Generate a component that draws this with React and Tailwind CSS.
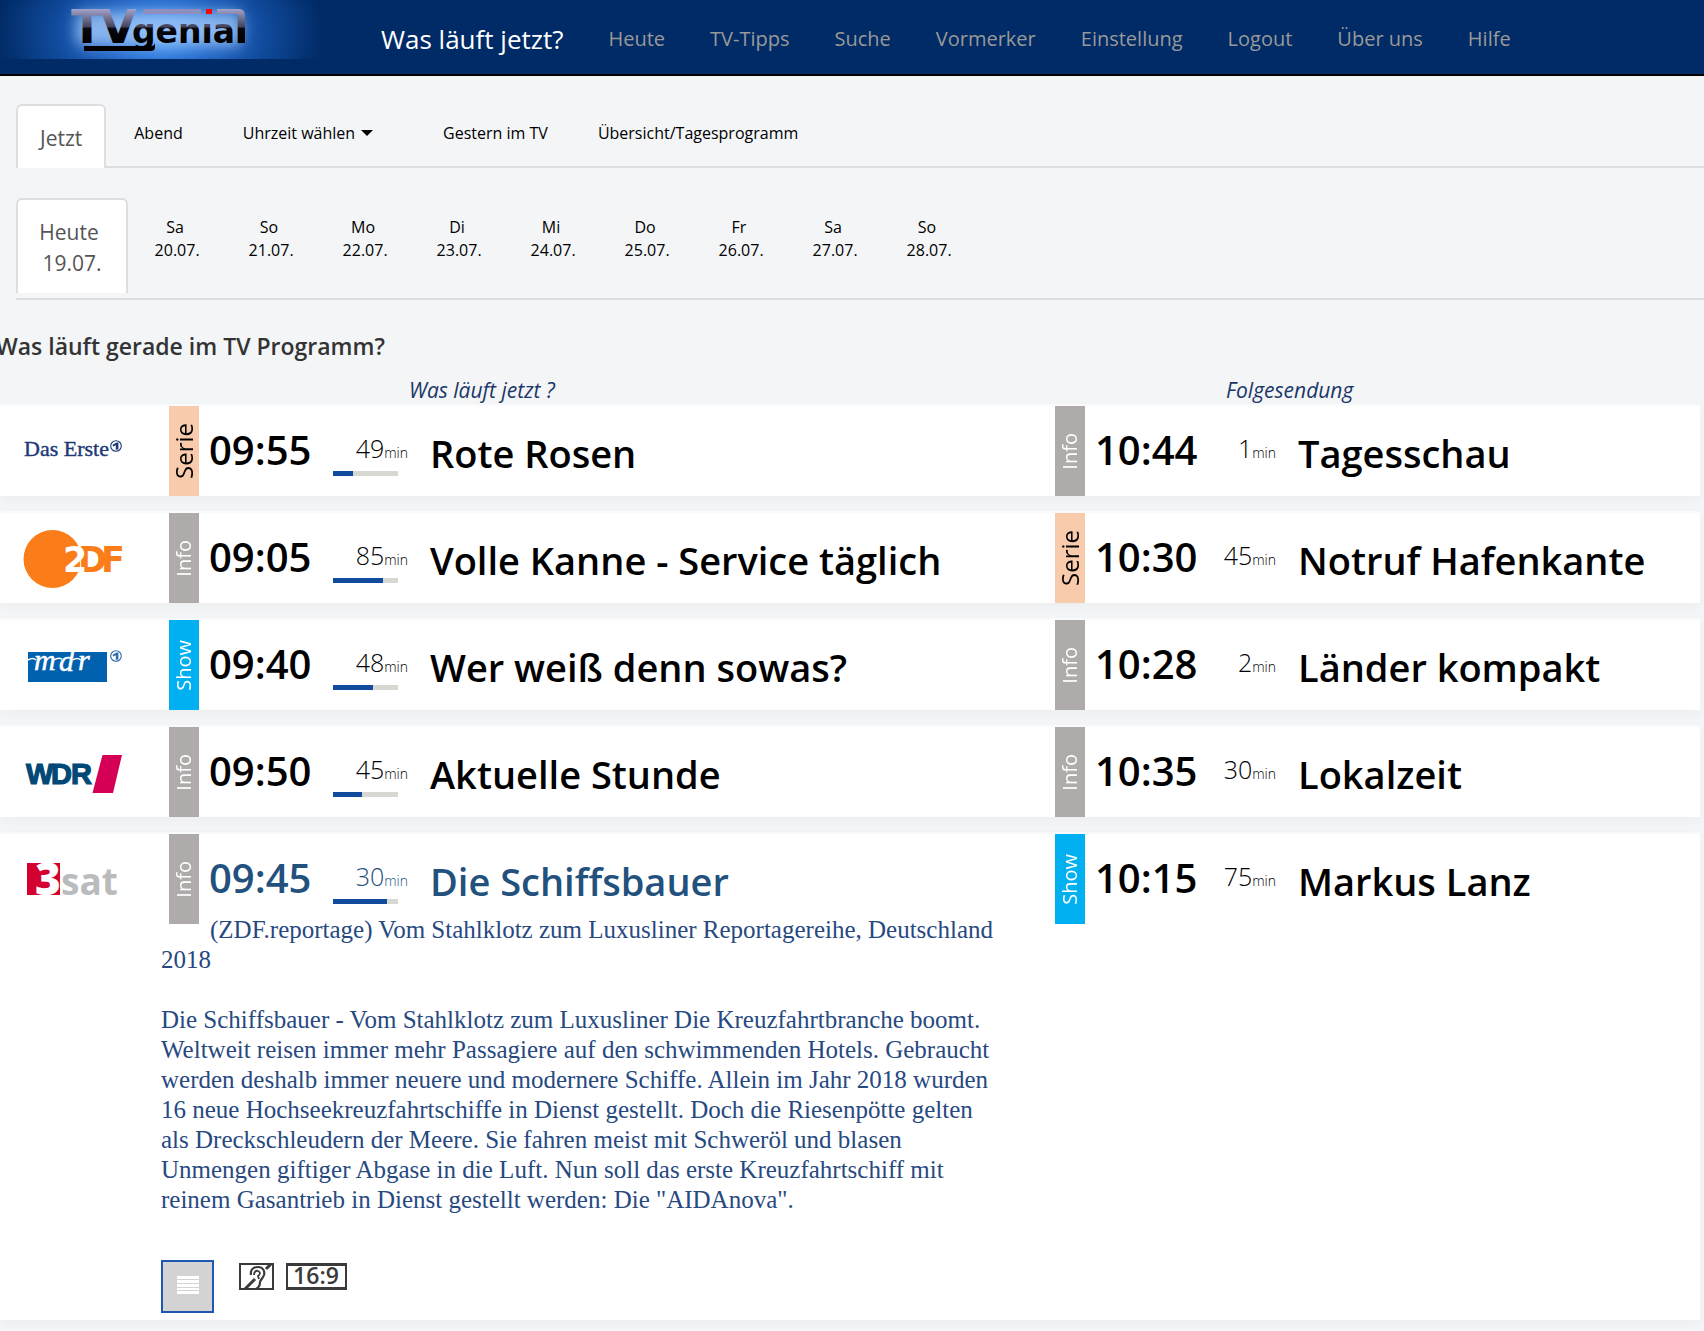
import React from 'react';

const NAV = ['Heute', 'TV-Tipps', 'Suche', 'Vormerker', 'Einstellung', 'Logout', 'Über uns', 'Hilfe'];

const DAYS = [
    ['Sa', '20.07.'],
    ['So', '21.07.'],
    ['Mo', '22.07.'],
    ['Di', '23.07.'],
    ['Mi', '24.07.'],
    ['Do', '25.07.'],
    ['Fr', '26.07.'],
    ['Sa', '27.07.'],
    ['So', '28.07.'],
];

const GENRES = {
    Serie: 'bg-[#f8cbad] text-black text-2xl',
    Info: 'bg-[#afabaa] text-white text-xl',
    Show: 'bg-[#00b0f0] text-white text-xl',
};

function SiteLogo() {
    return (
        <svg className="h-[59px] w-[323px] shrink-0" viewBox="0 0 323 59" role="img" aria-label="TVgenial">
            <defs>
                <radialGradient id="glow" gradientUnits="userSpaceOnUse" cx="0" cy="0" r="1" gradientTransform="translate(160 34) scale(163 105)">
                    <stop offset="0" stopColor="#4a9bf5" />
                    <stop offset="0.35" stopColor="#2569c8" />
                    <stop offset="0.65" stopColor="#104a9c" />
                    <stop offset="1" stopColor="#002b66" />
                </radialGradient>
                <linearGradient id="chrome" gradientUnits="userSpaceOnUse" x1="0" y1="9" x2="0" y2="44">
                    <stop offset="0" stopColor="#a3a3cc" />
                    <stop offset="0.5" stopColor="#45455f" />
                    <stop offset="0.56" stopColor="#08080d" />
                    <stop offset="1" stopColor="#000" />
                </linearGradient>
                <filter id="halo" x="-20%" y="-50%" width="140%" height="200%">
                    <feGaussianBlur stdDeviation="7" />
                </filter>
            </defs>
            <rect width="323" height="59" fill="url(#glow)" />
            <rect x="76" y="12" width="166" height="34" rx="8" fill="#a9cdfb" opacity="0.75" filter="url(#halo)" />
            <g fill="url(#chrome)" fontFamily="DejaVu Sans" fontWeight="700">
                <text x="71" y="43" fontSize="47">T</text>
                <text x="100" y="43" fontSize="47">V</text>
                <text x="132" y="43" fontSize="33">genıal</text>
            </g>
            <path d="M144 9h57v5h-59z" fill="#8f8fbf" />
            <path d="M217 9h22q6 0 6 7v27h-6V18q0-4-4-4h-18z" fill="url(#chrome)" />
            <rect x="206" y="9" width="6" height="5" fill="#f00" />
            <path d="M84 46h67q4 0 4-4v5q0 4-4 4H84z" />
        </svg>
    );
}

function ArdMark({ x, y, color }) {
    return (
        <g transform={`translate(${x} ${y})`}>
            <circle r="5.3" fill="none" stroke={color} strokeWidth="1.1" />
            <path d="M-3.4-1.2 0.6-3.6H2.4V3.2L-0.2 4V-0.8L-3 0.6z" fill={color} />
        </g>
    );
}

const LOGOS = {
    'Das Erste': (
        <>
            <text x="24" y="50" fontFamily="Liberation Serif" fontSize="22" fill="#1d3a78" stroke="#1d3a78" strokeWidth="0.4">Das Erste</text>
            <ArdMark x={116} y={40} color="#1d3a78" />
        </>
    ),
    ZDF: (
        <g fontFamily="DejaVu Sans" fontWeight="700" fontSize="35">
            <circle cx="52.500" cy="46" r="29" fill="#fa7d19" />
            <text x="78" y="59" fill="#fa7d19" stroke="#fff" strokeWidth="2" paintOrder="stroke">D</text>
            <text x="101" y="59" fill="#fa7d19">F</text>
            <text x="63" y="59" fill="#fff">2</text>
        </g>
    ),
    MDR: (
        <>
            <rect x="28" y="32" width="79" height="30" fill="#0061af" />
            <g fill="#fff" stroke="#fff" strokeWidth="0.500" fontFamily="Liberation Serif" fontStyle="italic" fontSize="30">
                <text x="34" y="50">m</text>
                <text x="59" y="51">d</text>
                <text x="78" y="50">r</text>
            </g>
            <path d="M28 40q5-3 8 0M54 40q4-3 8-1M73 40q4-3 8 0" fill="none" stroke="#fff" strokeWidth="1.500" />
            <ArdMark x={116} y={36} color="#2c6ca8" />
        </>
    ),
    WDR: (
        <>
            <g fill="#004876" stroke="#004876" strokeWidth="1.200" fontFamily="Liberation Sans" fontWeight="700" fontSize="29">
                <text x="26" y="57">W</text>
                <text x="51" y="57">D</text>
                <text x="71" y="57">R</text>
            </g>
            <path d="M102.500 28H122l-9 38H92.500z" fill="#d50055" />
        </>
    ),
    '3sat': (
        <g fontFamily="Open Sans" fontWeight="800">
            <rect x="27" y="29" width="33" height="32" fill="#d4002f" />
            <text x="35" y="61" fontSize="44" fill="#fff">3</text>
            <text x="61" y="61" fontSize="37" fontWeight="700" fill="#babbbc">sat</text>
        </g>
    ),
};

const PROGRAMS = [
    {
        channel: 'Das Erste',
        now: { genre: 'Serie', time: '09:55', minutes: 49, progress: 20, title: 'Rote Rosen' },
        next: { genre: 'Info', time: '10:44', minutes: 1, title: 'Tagesschau' },
    },
    {
        channel: 'ZDF',
        now: { genre: 'Info', time: '09:05', minutes: 85, progress: 50, title: 'Volle Kanne - Service täglich' },
        next: { genre: 'Serie', time: '10:30', minutes: 45, title: 'Notruf Hafenkante' },
    },
    {
        channel: 'MDR',
        now: { genre: 'Show', time: '09:40', minutes: 48, progress: 40, title: 'Wer weiß denn sowas?' },
        next: { genre: 'Info', time: '10:28', minutes: 2, title: 'Länder kompakt' },
    },
    {
        channel: 'WDR',
        now: { genre: 'Info', time: '09:50', minutes: 45, progress: 29, title: 'Aktuelle Stunde' },
        next: { genre: 'Info', time: '10:35', minutes: 30, title: 'Lokalzeit' },
    },
    {
        channel: '3sat',
        now: { genre: 'Info', time: '09:45', minutes: 30, progress: 54, title: 'Die Schiffsbauer' },
        next: { genre: 'Show', time: '10:15', minutes: 75, title: 'Markus Lanz' },
        subtitle: '(ZDF.reportage) Vom Stahlklotz zum Luxusliner Reportagereihe, Deutschland 2018',
        text: 'Die Schiffsbauer - Vom Stahlklotz zum Luxusliner Die Kreuzfahrtbranche boomt. Weltweit reisen immer mehr Passagiere auf den schwimmenden Hotels. Gebraucht werden deshalb immer neuere und modernere Schiffe. Allein im Jahr 2018 wurden 16 neue Hochseekreuzfahrtschiffe in Dienst gestellt. Doch die Riesenpötte gelten als Dreckschleudern der Meere. Sie fahren meist mit Schweröl und blasen Unmengen giftiger Abgase in die Luft. Nun soll das erste Kreuzfahrtschiff mit reinem Gasantrieb in Dienst gestellt werden: Die "AIDAnova".',
    },
];

function Entry({ genre, time, minutes, progress, title, open }) {
    const hasBar = progress !== undefined;

    return (
        <div className={`ml-2 flex h-[81px] items-start whitespace-nowrap ${open ? 'text-[#23517e]' : 'text-black'}`}>
            <div className={`flex h-[90px] w-[30px] shrink-0 items-center justify-center ${GENRES[genre]}`}>
                <span className="rotate-180 leading-[30px] [writing-mode:vertical-rl]">{genre}</span>
            </div>
            <time className="w-[134px] shrink-0 pl-2.5 text-[40px] leading-[88px] font-semibold">{time}</time>
            <div className={`shrink-0 pt-[22px] ${hasBar ? 'w-[75px]' : 'w-[57px]'}`}>
                <p className="text-right text-[25px] leading-10 font-light">
                    {minutes}<span className="text-sm">min</span>
                </p>
                {hasBar && (
                    <div className="mt-[3px] h-[5px] w-[65px] bg-[#d8d8d3]">
                        <div className="h-full bg-[#104b9e]" style={{ width: `${progress}px` }} />
                    </div>
                )}
            </div>
            <h3 className="ml-[22px] text-[38px] leading-[94px] font-semibold">{title}</h3>
        </div>
    );
}

function Details({ subtitle, text }) {
    return (
        <div className="pb-[7px] font-['Liberation_Serif',serif] text-[25px] leading-[30px] text-[#27497f]">
            <p className="max-w-[841px] indent-[49px]">{subtitle}</p>
            <p className="mt-[30px] max-w-[841px]">{text}</p>
            <div className="mt-[45px] flex items-start">
                <button type="button" aria-label="Details" className="flex h-[53px] w-[53px] items-center justify-center border-2 border-[#1e56b4] bg-[#d3d3d3]">
                    <svg className="mb-1 h-[18px] w-[22px]" viewBox="0 0 22 18" fill="#fff">
                        <path d="M0 0h22v3H0zM0 4h22v3H0zM0 8h22v3H0zM0 12h22v2H0zM0 15h22v3H0z" />
                    </svg>
                </button>
                <svg className="mt-[3px] ml-[25px] h-[27px] w-[35px]" viewBox="0 0 35 27" fill="none" stroke="#3a3a3a" role="img" aria-label="Untertitel für Gehörlose">
                    <rect x="1" y="1" width="33" height="25" strokeWidth="2" />
                    <path d="M6 26 16 16M27 6l5-5" strokeWidth="3" />
                    <path d="M12 12C11 6 15 4 19 4c5 0 7 4 6 8-1 3-3 4-4 7 0 3-2 6-4 7" strokeWidth="2.200" />
                    <path d="M15 12c0-3 2-5 4-4 3 1 2 4 0 5l1 3" strokeWidth="1.800" />
                </svg>
                <svg className="mt-[3px] ml-3 h-[27px] w-[61px] overflow-visible" viewBox="0 0 61 27" role="img" aria-label="16:9">
                    <rect x="1" y="1" width="59" height="25" fill="#fff" stroke="#3a3a3a" strokeWidth="2" />
                    <path d="M0 0h61v3H0zM0 24h61v3H0z" fill="#3a3a3a" />
                    <text x="30" y="21" textAnchor="middle" fontFamily="Open Sans" fontWeight="600" fontSize="23" fill="#3a3a3a">16:9</text>
                </svg>
            </div>
        </div>
    );
}

export default function App() {
    return (
        <div className="min-h-screen overflow-x-hidden bg-[#f3f5f7] font-['Open_Sans',sans-serif] text-black">
            <header className="flex h-[76px] items-start border-b-2 border-black bg-[#002b66]">
                <SiteLogo />
                <nav className="ml-[58px] flex items-center gap-[45px] pt-0.5 text-xl leading-[74px] whitespace-nowrap text-[#999]">
                    <a href="#jetzt" className="text-[26px] leading-[72px] text-white">Was läuft jetzt?</a>
                    {NAV.map((item) => (
                        <a key={item} href="#">{item}</a>
                    ))}
                </nav>
            </header>

            <nav className="mt-7 ml-4 flex h-16 items-start border-b-2 border-[#dcdee0] leading-[58px] whitespace-nowrap">
                <a href="#jetzt" className="h-16 rounded-t-md border-2 border-b-0 border-[#dcdee0] bg-white px-[22px] text-[21px] leading-[64px] text-[#555]">Jetzt</a>
                <a href="#abend" className="ml-7">Abend</a>
                <button type="button" className="ml-[60px] flex items-center gap-1.5">
                    Uhrzeit wählen
                    <svg className="h-1.5 w-3" viewBox="0 0 12 6"><path d="M0 0h12L6 6z" /></svg>
                </button>
                <a href="#gestern" className="ml-[70px]">Gestern im TV</a>
                <a href="#uebersicht" className="ml-[50px]">Übersicht/Tagesprogramm</a>
            </nav>

            <nav className="mt-[30px] ml-4 flex h-[102px] items-start border-b-2 border-[#dcdee0] text-center leading-[23px]">
                <a href="#heute" className="h-[95px] w-28 rounded-t-md border-2 border-b-0 border-[#dcdee0] bg-white pt-[17px] text-[21px] leading-[31px] text-[#555]">
                    <span className="mr-1.5 block">Heute</span>
                    <span className="block">19.07.</span>
                </a>
                {DAYS.map(([day, date]) => (
                    <a key={date} href="#" className="w-[94px] pt-[18px]">
                        <span className="block">{day}</span>
                        <span className="block">&nbsp;{date}</span>
                    </a>
                ))}
            </nav>

            <h1 className="mt-[30px] -ml-1 text-[23px] leading-8 font-semibold text-[#333]">Was läuft gerade im TV Programm?</h1>

            <main className="mt-[14px] mr-1">
                <div className="grid grid-cols-[161px_minmax(0,886fr)_minmax(0,653fr)] text-[21px] leading-7 text-[#1b3768] italic">
                    <h2 className="col-start-2 ml-[248px]">Was läuft jetzt ?</h2>
                    <h2 className="ml-[179px]">Folgesendung</h2>
                </div>
                <div className="flex flex-col gap-[15px]">
                    {PROGRAMS.map((p) => (
                        <section key={p.channel} className="grid min-h-[92px] grid-cols-[161px_minmax(0,886fr)_minmax(0,653fr)] border-t-2 border-[#f9fafb] bg-white shadow-[0_4px_10px_rgba(0,0,0,0.03)]">
                            <svg className="h-[90px] w-[161px]" viewBox="0 0 161 90" role="img" aria-label={p.channel}>
                                {LOGOS[p.channel]}
                            </svg>
                            <div>
                                <Entry {...p.now} open={Boolean(p.text)} />
                                {p.text && <Details subtitle={p.subtitle} text={p.text} />}
                            </div>
                            <div>
                                <Entry {...p.next} />
                            </div>
                        </section>
                    ))}
                </div>
            </main>
        </div>
    );
}
